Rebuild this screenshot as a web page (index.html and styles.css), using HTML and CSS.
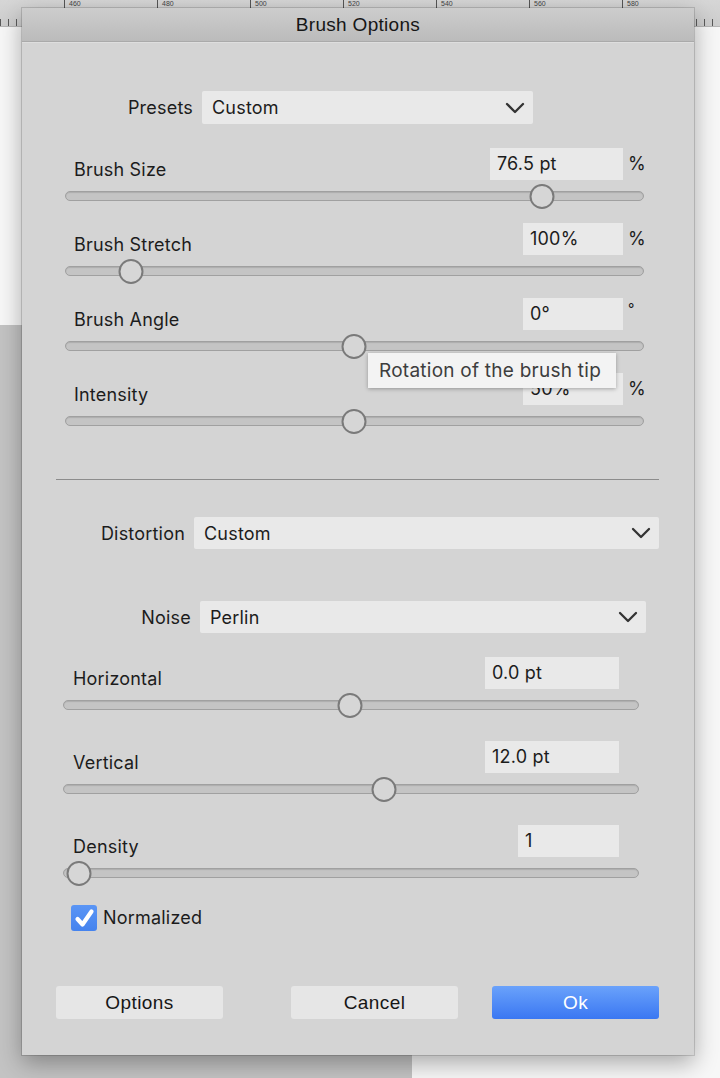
FILE: index.html
```html
<!DOCTYPE html>
<html>
<head>
<meta charset="utf-8">
<title>Brush Options</title>
<link rel="stylesheet" href="styles.css">
</head>
<body>
<div class="ruler">
  <div class="ruler-labels">
    <span>460</span><span>480</span><span>500</span><span>520</span><span>540</span><span>560</span><span>580</span>
  </div>
</div>
<div class="gray-block"></div>

<div class="dialog">
  <div class="titlebar">Brush Options</div>
  <div class="content">
    <div class="select-row presets">
      <span class="sel-label">Presets</span>
      <div class="select"><span>Custom</span>
        <svg class="chev" viewBox="0 0 20 12" width="20" height="12"><path d="M2 2 L10 10 L18 2"/></svg>
      </div>
    </div>

    <div class="sliders s1">
      <div class="group">
        <div class="g-head"><span class="g-label">Brush Size</span><span class="g-input wide">76.5 pt</span><span class="g-unit">%</span></div>
        <div class="slider"><div class="track"></div><div class="thumb" style="left:82.4%"></div></div>
      </div>
      <div class="group">
        <div class="g-head"><span class="g-label">Brush Stretch</span><span class="g-input">100%</span><span class="g-unit">%</span></div>
        <div class="slider"><div class="track"></div><div class="thumb" style="left:11.4%"></div></div>
      </div>
      <div class="group">
        <div class="g-head"><span class="g-label">Brush Angle</span><span class="g-input">0°</span><span class="g-unit deg">°</span></div>
        <div class="slider"><div class="track"></div><div class="thumb" style="left:49.9%"></div></div>
      </div>
      <div class="group">
        <div class="g-head"><span class="g-label">Intensity</span><span class="g-input">50%</span><span class="g-unit">%</span></div>
        <div class="slider"><div class="track"></div><div class="thumb" style="left:49.9%"></div></div>
      </div>
    </div>

    <div class="divider"></div>

    <div class="select-row distortion">
      <span class="sel-label">Distortion</span>
      <div class="select"><span>Custom</span>
        <svg class="chev" viewBox="0 0 20 12" width="20" height="12"><path d="M2 2 L10 10 L18 2"/></svg>
      </div>
    </div>

    <div class="select-row noise">
      <span class="sel-label">Noise</span>
      <div class="select"><span>Perlin</span>
        <svg class="chev" viewBox="0 0 20 12" width="20" height="12"><path d="M2 2 L10 10 L18 2"/></svg>
      </div>
    </div>

    <div class="sliders s2">
      <div class="group">
        <div class="g-head"><span class="g-label">Horizontal</span><span class="g-input w134">0.0 pt</span><span class="g-unit"></span></div>
        <div class="slider"><div class="track"></div><div class="thumb" style="left:49.8%"></div></div>
      </div>
      <div class="group">
        <div class="g-head"><span class="g-label">Vertical</span><span class="g-input w134">12.0 pt</span><span class="g-unit"></span></div>
        <div class="slider"><div class="track"></div><div class="thumb" style="left:55.7%"></div></div>
      </div>
      <div class="group">
        <div class="g-head"><span class="g-label">Density</span><span class="g-input w101">1</span><span class="g-unit"></span></div>
        <div class="slider"><div class="track"></div><div class="thumb" style="left:2.8%"></div></div>
      </div>
    </div>

    <div class="check-row">
      <span class="checkbox">
        <svg viewBox="0 0 26 26" width="26" height="26"><path d="M6.5 14 L11.5 19.5 L20.5 6.5"/></svg>
      </span>
      <span class="check-label">Normalized</span>
    </div>

    <div class="buttons">
      <button class="btn options">Options</button>
      <button class="btn cancel">Cancel</button>
      <button class="btn ok">Ok</button>
    </div>
  </div>
  <div class="tooltip">Rotation of the brush tip</div>
</div>
</body>
</html>
```
FILE: styles.css
```css
html, body {
  margin: 0;
  padding: 0;
}
body {
  width: 720px;
  height: 1078px;
  overflow: hidden;
  position: relative;
  background: #f7f7f7;
  font-family: Inter, "Noto Sans", sans-serif;
  color: #1c1c1c;
}

/* ---------- desktop background ---------- */
.ruler {
  height: 27px;
  background:
    repeating-linear-gradient(90deg, #5a5a5a 0 1px, transparent 1px 8px) left bottom / 100% 7px no-repeat,
    linear-gradient(#d6d6d6, #cdcdcd);
  border-bottom: 1px solid #b5b5b5;
  box-sizing: border-box;
  overflow: hidden;
}
.ruler-labels {
  display: flex;
  padding-left: 64px;
}
.ruler-labels span {
  width: 93px;
  flex: none;
  font-family: "Liberation Sans", sans-serif;
  font-size: 7px;
  line-height: 8px;
  color: #444;
  border-left: 1px solid #555;
  padding-left: 4px;
  box-sizing: border-box;
}
.gray-block {
  position: absolute;
  left: 0;
  top: 325px;
  width: 412px;
  bottom: 0;
  background: #c3c3c3;
}

/* ---------- dialog window ---------- */
.dialog {
  position: absolute;
  left: 22px;
  top: 8px;
  width: 672px;
  height: 1047px;
  background: #d4d4d4;
  box-shadow: 0 0 0 1px rgba(0,0,0,0.14), 0 8px 22px rgba(0,0,0,0.32);
}
.titlebar {
  height: 34px;
  box-sizing: border-box;
  background: linear-gradient(#cdcdcd, #bbbbbb);
  border-bottom: 1px solid #aaaaaa;
  box-shadow: 0 1px 0 #dedede;
  text-align: center;
  font-family: "Liberation Sans", sans-serif;
  font-size: 19px;
  letter-spacing: 0.3px;
  line-height: 34px;
  color: #161616;
}
.content {
  padding-top: 49px;
  font-size: 18px;
  letter-spacing: 0.2px;
}

/* ---------- select rows ---------- */
.select-row {
  display: flex;
  align-items: center;
}
.sel-label {
  flex: none;
  text-align: right;
  padding-right: 9px;
  box-sizing: border-box;
}
.select {
  flex: none;
  height: 32px;
  box-sizing: border-box;
  background: #e9e9e9;
  border-radius: 2px;
  display: flex;
  align-items: center;
  justify-content: space-between;
  padding: 0 8px 0 10px;
}
.chev path {
  fill: none;
  stroke: #333;
  stroke-width: 2.3;
  stroke-linecap: round;
  stroke-linejoin: round;
}
.presets .sel-label { width: 180px; }
.presets .select { width: 331px; height: 33px; }
.distortion { margin-top: 37px; }
.distortion .sel-label { width: 172px; }
.distortion .select { width: 465px; }
.noise { margin-top: 52px; }
.noise .sel-label { width: 178px; }
.noise .select { width: 446px; }

/* ---------- sliders ---------- */
.sliders {
  display: flex;
  flex-direction: column;
}
.s1 {
  margin-top: 24px;
  margin-left: 43px;
  width: 579px;
  gap: 14px;
}
.s2 {
  margin-top: 24px;
  margin-left: 41px;
  width: 576px;
  gap: 23px;
}
.g-head {
  display: flex;
  align-items: flex-end;
  height: 32px;
}
.g-label {
  flex: 1;
  padding-left: 9px;
  line-height: 20px;
  padding-bottom: 0;
}
.s2 .g-label { padding-left: 10px; }
.g-input {
  flex: none;
  width: 100px;
  height: 32px;
  box-sizing: border-box;
  background: #e9e9e9;
  padding-left: 7px;
  line-height: 32px;
}
.g-input.wide { width: 133px; }
.g-input.w134 { width: 134px; }
.g-input.w101 { width: 101px; }
.g-unit {
  flex: none;
  width: 21px;
  align-self: center;
  padding-left: 5px;
  box-sizing: border-box;
  line-height: 32px;
}
.s2 .g-unit { width: 20px; }
.g-unit.deg { align-self: flex-start; line-height: 22px; font-size: 14px; }

.slider {
  position: relative;
  height: 26px;
  margin-top: 3px;
  display: flex;
  align-items: center;
}
.track {
  flex: 1;
  height: 10px;
  box-sizing: border-box;
  background: #c4c4c4;
  border: 1px solid #a0a0a0;
  border-radius: 5px;
  box-shadow: inset 0 1px 1px rgba(0,0,0,0.12);
}
.thumb {
  position: absolute;
  top: 0.5px;
  width: 25px;
  height: 25px;
  box-sizing: border-box;
  border-radius: 50%;
  background: #d6d6d6;
  border: 2px solid #7a7a7a;
  transform: translateX(-50%);
}

.divider {
  margin-top: 45px;
  margin-left: 34px;
  width: 603px;
  height: 1px;
  background: #8c8c8c;
}

/* ---------- checkbox ---------- */
.check-row {
  margin-top: 19px;
  margin-left: 49px;
  display: flex;
  align-items: center;
  gap: 6px;
  height: 26px;
}
.checkbox {
  width: 26px;
  height: 26px;
  border-radius: 3px;
  background: linear-gradient(#5a95f5, #4583ee);
  display: block;
}
.checkbox svg { display: block; }
.checkbox path {
  fill: none;
  stroke: #fff;
  stroke-width: 4.2;
  stroke-linecap: round;
  stroke-linejoin: round;
}
.check-label { line-height: 26px; }

/* ---------- buttons ---------- */
.buttons {
  margin-top: 55px;
  margin-left: 34px;
  display: flex;
}
.btn {
  width: 167px;
  height: 33px;
  border: none;
  border-radius: 3px;
  background: #e6e6e6;
  font-family: "Liberation Sans", sans-serif;
  font-size: 19px;
  letter-spacing: 0.4px;
  color: #161616;
  padding: 0;
}
.btn.cancel { margin-left: 68px; }
.btn.ok {
  margin-left: 34px;
  background: linear-gradient(#6aa2fb, #3a77f2);
  color: #fff;
}

/* ---------- tooltip ---------- */
.tooltip {
  position: absolute;
  left: 346px;
  top: 345px;
  width: 248px;
  height: 35px;
  box-sizing: border-box;
  background: #f3f3f3;
  box-shadow: 0 1px 4px rgba(0,0,0,0.3);
  font-size: 19px;
  letter-spacing: 0.25px;
  line-height: 35px;
  color: #3d3d3d;
  padding-left: 11px;
  white-space: nowrap;
}
```
